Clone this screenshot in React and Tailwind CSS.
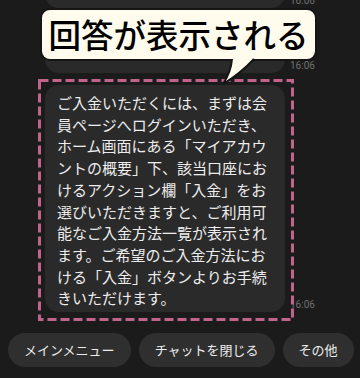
const lines = [
  'ご入金いただくには、まずは会',
  '員ページへログインいただき、',
  'ホーム画面にある「マイアカウ',
  'ントの概要」下、該当口座にお',
  'けるアクション欄「入金」をお',
  '選びいただきますと、ご利用可',
  '能なご入金方法一覧が表示され',
  'ます。ご希望のご入金方法にお',
  'ける「入金」ボタンよりお手続',
  'きいただけます。'
];

const Time = () => (
  <span className="ml-[5px] mb-[1px] text-[10px] leading-[12px] text-[#707070] font-['Roboto',sans-serif]">16:06</span>
);

export default function App() {
  return (
    <div className="relative w-[360px] h-[378px] overflow-hidden bg-[#1c1b1b] font-['Noto_Sans_CJK_JP',sans-serif]">
      <div className="flex flex-col -mt-[34px]">
        <div className="flex items-end ml-[45px]">
          <div className="w-[240px] h-[42px] rounded-[14px] bg-[#2a2a2a]" />
          <Time />
        </div>
        <div className="flex items-end ml-[45px] mt-[11px]">
          <div className="w-[240px] h-[54px] rounded-[14px] bg-[#2a2a2a]" />
          <Time />
        </div>
        <div className="flex items-end ml-[45px] mt-[12px]">
          <div className="w-[240px] h-[227px] rounded-[14px] bg-[#2a2a2a] pl-[12px] pt-[7px] text-[15px] leading-[21.7px] text-[#ededed]">
            {lines.map((l) => (
              <div key={l} className="whitespace-nowrap">{l}</div>
            ))}
          </div>
          <Time />
        </div>
        <div className="flex gap-2 pl-[8px] mt-[21px]">
          {['メインメニュー', 'チャットを閉じる', 'その他'].map((b) => (
            <div key={b} className="h-[34px] px-4 rounded-full bg-[#2f2f2f] text-[13px] text-[#ececec] flex items-center whitespace-nowrap">
              {b}
            </div>
          ))}
        </div>
      </div>

      {/* annotation overlay */}
      <svg className="absolute left-0 top-0 pointer-events-none" width="360" height="378">
        <rect x="39.5" y="80.5" width="253" height="239" fill="none" stroke="#c0648a" strokeWidth="3" strokeDasharray="9 4" />
      </svg>
      <div className="absolute left-[40px] top-[8px] w-[277px] h-[53px] rounded-[10px] bg-[#fffcee] border-2 border-[#151515] flex items-center justify-center">
        <span className="text-[32.5px] leading-none font-medium text-black">回答が表示される</span>
      </div>
      <svg className="absolute left-[215px] top-[56px] pointer-events-none" width="45" height="32">
        <path d="M17 0 L17 2 Q16 16 8 28 Q25 18 39 2 L39 0 Z" fill="#fffcee" />
        <path d="M17 3 Q16 16 8 28 Q25 18 39 3" fill="none" stroke="#151515" strokeWidth="2" strokeLinejoin="round" />
      </svg>
    </div>
  );
}
